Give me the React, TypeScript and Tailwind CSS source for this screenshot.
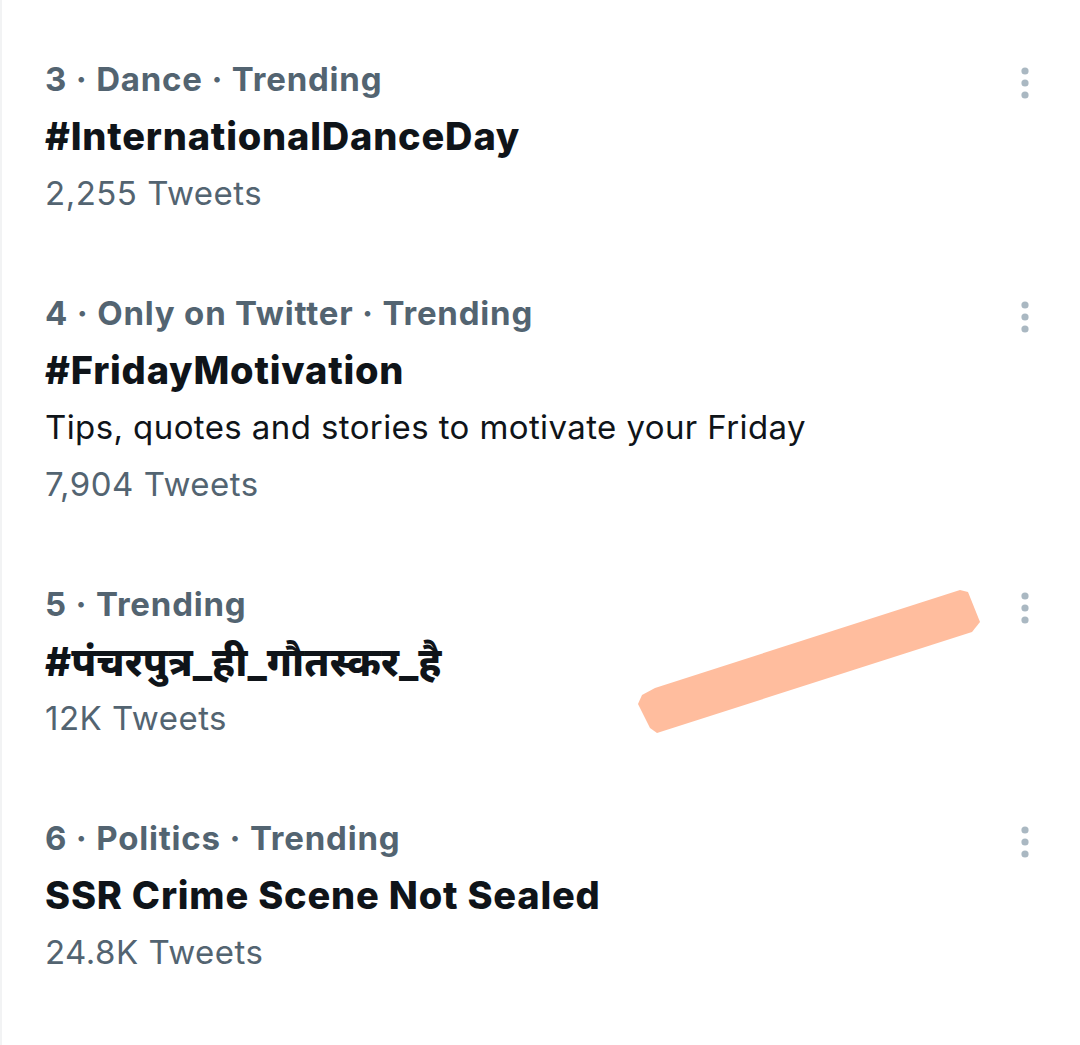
import React from "react";

type Trend = {
  rank: number;
  context: string[];
  title: string;
  description?: string;
  count: string;
};

const trends: Trend[] = [
  { rank: 3, context: ["Dance"], title: "#InternationalDanceDay", count: "2,255 Tweets" },
  {
    rank: 4,
    context: ["Only on Twitter"],
    title: "#FridayMotivation",
    description: "Tips, quotes and stories to motivate your Friday",
    count: "7,904 Tweets",
  },
  { rank: 5, context: [], title: "#पंचरपुत्र_ही_गौतस्कर_है", count: "12K Tweets" },
  { rank: 6, context: ["Politics"], title: "SSR Crime Scene Not Sealed", count: "24.8K Tweets" },
];

function MoreDots() {
  return (
    <svg width="10" height="34" viewBox="0 0 10 34" className="text-[#aab8c2]" fill="currentColor">
      <circle cx="5" cy="5" r="3.6" />
      <circle cx="5" cy="17" r="3.6" />
      <circle cx="5" cy="29" r="3.6" />
    </svg>
  );
}

function TrendRow({ trend }: { trend: Trend }) {
  const meta = [String(trend.rank), ...trend.context, "Trending"].join(" · ");
  // hindi tag: no letter spacing so the conjuncts stay shaped
  const latin = /^[\x00-\x7f]*$/.test(trend.title);
  return (
    <div className="flex items-start justify-between pl-[43px] pr-[50px] pt-[31px] pb-[32px]">
      <div className="flex flex-col">
        <p className="text-[33px] leading-[57px] font-bold tracking-[0.8px] text-[#536471]">{meta}</p>
        <p
          className={
            latin
              ? "text-[38px] leading-[57px] font-extrabold tracking-[0.8px] text-[#0f1419]"
              : "text-[40px] leading-[57px] font-extrabold text-[#0f1419]"
          }
        >
          {trend.title}
        </p>
        {trend.description && (
          <p className="text-[33px] leading-[57px] tracking-[0.4px] text-[#0f1419]">{trend.description}</p>
        )}
        <p className="text-[33px] leading-[57px] tracking-[0.5px] text-[#536471]">{trend.count}</p>
      </div>
      <div className="pt-[15px]">
        <MoreDots />
      </div>
    </div>
  );
}

export default function App() {
  return (
    <div
      className="relative w-[1080px] h-[1045px] bg-white border-l-2 border-[#f2f3f4] overflow-hidden pt-[20px]"
      style={{ fontFamily: "Inter, 'Noto Sans', 'Noto Sans Devanagari', sans-serif" }}
    >
      {trends.map((t) => (
        <TrendRow key={t.rank} trend={t} />
      ))}

      {/* highlighter scribble over row 5 */}
      <svg className="absolute left-0 top-0 pointer-events-none" width="1080" height="1045">
        <polygon
          points="653,688 958,590 966,592 978,622 970,632 655,733 648,728 636,704 640,695"
          fill="#ffbd9e"
        />
      </svg>
    </div>
  );
}
